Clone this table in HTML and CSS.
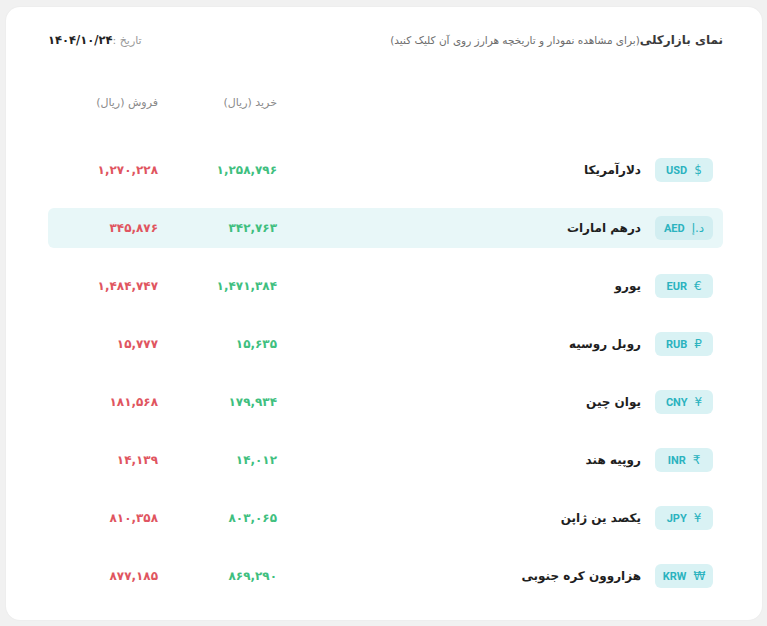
FILE: index.html
```html
<!DOCTYPE html>
<html lang="fa" dir="rtl">
<head>
<meta charset="utf-8">
<link rel="stylesheet" href="styles.css">
</head>
<body>
<div class="card">
  <div class="head">
    <div class="title"><b>نمای بازارکلی</b><span class="hint">(برای مشاهده نمودار و تاریخچه هرارز روی آن کلیک کنید)</span></div>
    <div class="date"><span class="date-label">تاریخ :</span><b>۱۴۰۴/۱۰/۲۴</b></div>
  </div>
  <div class="table">
    <div class="row cols">
      <div class="name-cell"></div>
      <div class="num">خرید (ریال)</div>
      <div class="num">فروش (ریال)</div>
    </div>
    <div class="row">
      <div class="name-cell"><span class="badge"><span class="sym">$</span><span class="code">USD</span></span><span class="name">دلارآمریکا</span></div>
      <div class="num buy">۱,۲۵۸,۷۹۶</div>
      <div class="num sell">۱,۲۷۰,۲۲۸</div>
    </div>
    <div class="row active">
      <div class="name-cell"><span class="badge"><span class="sym">د.إ</span><span class="code">AED</span></span><span class="name">درهم امارات</span></div>
      <div class="num buy">۳۴۲,۷۶۳</div>
      <div class="num sell">۳۴۵,۸۷۶</div>
    </div>
    <div class="row">
      <div class="name-cell"><span class="badge"><span class="sym">€</span><span class="code">EUR</span></span><span class="name">یورو</span></div>
      <div class="num buy">۱,۴۷۱,۳۸۴</div>
      <div class="num sell">۱,۴۸۴,۷۴۷</div>
    </div>
    <div class="row">
      <div class="name-cell"><span class="badge"><span class="sym">₽</span><span class="code">RUB</span></span><span class="name">روبل روسیه</span></div>
      <div class="num buy">۱۵,۶۳۵</div>
      <div class="num sell">۱۵,۷۷۷</div>
    </div>
    <div class="row">
      <div class="name-cell"><span class="badge"><span class="sym">¥</span><span class="code">CNY</span></span><span class="name">یوان چین</span></div>
      <div class="num buy">۱۷۹,۹۳۴</div>
      <div class="num sell">۱۸۱,۵۶۸</div>
    </div>
    <div class="row">
      <div class="name-cell"><span class="badge"><span class="sym">₹</span><span class="code">INR</span></span><span class="name">روپیه هند</span></div>
      <div class="num buy">۱۴,۰۱۲</div>
      <div class="num sell">۱۴,۱۳۹</div>
    </div>
    <div class="row">
      <div class="name-cell"><span class="badge"><span class="sym">¥</span><span class="code">JPY</span></span><span class="name">یکصد ین ژاپن</span></div>
      <div class="num buy">۸۰۳,۰۶۵</div>
      <div class="num sell">۸۱۰,۳۵۸</div>
    </div>
    <div class="row">
      <div class="name-cell"><span class="badge"><span class="sym">₩</span><span class="code">KRW</span></span><span class="name">هزاروون کره جنوبی</span></div>
      <div class="num buy">۸۶۹,۲۹۰</div>
      <div class="num sell">۸۷۷,۱۸۵</div>
    </div>
  </div>
</div>
</body>
</html>
```

FILE: styles.css
```css
* { box-sizing: border-box; }
html, body { margin: 0; padding: 0; }
body {
  background: #f1f1f1;
  font-family: "DejaVu Sans", "Noto Sans", sans-serif;
  color: #222;
  width: 767px;
  height: 626px;
  overflow: hidden;
}
.card {
  margin: 7px 5px 0 6px;
  height: 613px;
  background: #fff;
  border-radius: 14px;
  box-shadow: 0 0 2px rgba(0,0,0,0.06);
  padding: 23px 39px 0 42px;
}
.head {
  display: flex;
  justify-content: space-between;
  align-items: center;
  height: 20px;
}
.title { font-size: 12px; color: #333; }
.title b { font-weight: bold; color: #3a3a3a; }
.hint { color: #6d6d6d; font-size: 10.5px; }
.date { font-size: 11.5px; }
.date-label { color: #9a9a9a; font-size: 11px; }
.date b { color: #222; }
.table { margin-top: 32px; display: flex; flex-direction: column; gap: 18px; }
.row {
  display: grid;
  grid-template-columns: 1fr 119px 110px;
  align-items: center;
  height: 40px;
  border-radius: 6px;
  padding-right: 10px;
}
.row.cols { margin-bottom: 10px; color: #8a8a8a; font-size: 10.5px; }
.row.active { background: #e8f7f8; }
.num { direction: ltr; text-align: right; font-weight: bold; font-size: 12px; white-space: nowrap; }
.cols .num { font-weight: normal; direction: rtl; text-align: right; font-size: 11px; color: #8a8a8a; }
.buy { color: #3fbf7f; }
.sell { color: #e0555f; }
.name-cell { display: flex; align-items: center; gap: 14px; }
.badge {
  display: inline-flex;
  align-items: center;
  justify-content: center;
  gap: 7px;
  width: 58px;
  height: 24px;
  border-radius: 6px;
  background: #d9f2f4;
  color: #2bb3bf;
  direction: rtl;
}
.row.active .badge { background: #d2eef1; }
.code { font-family: Roboto, "Liberation Sans", sans-serif; font-weight: bold; font-size: 11px; }
.sym { font-size: 12px; }
.name { font-weight: bold; font-size: 12px; color: #1e1e1e; }
```
